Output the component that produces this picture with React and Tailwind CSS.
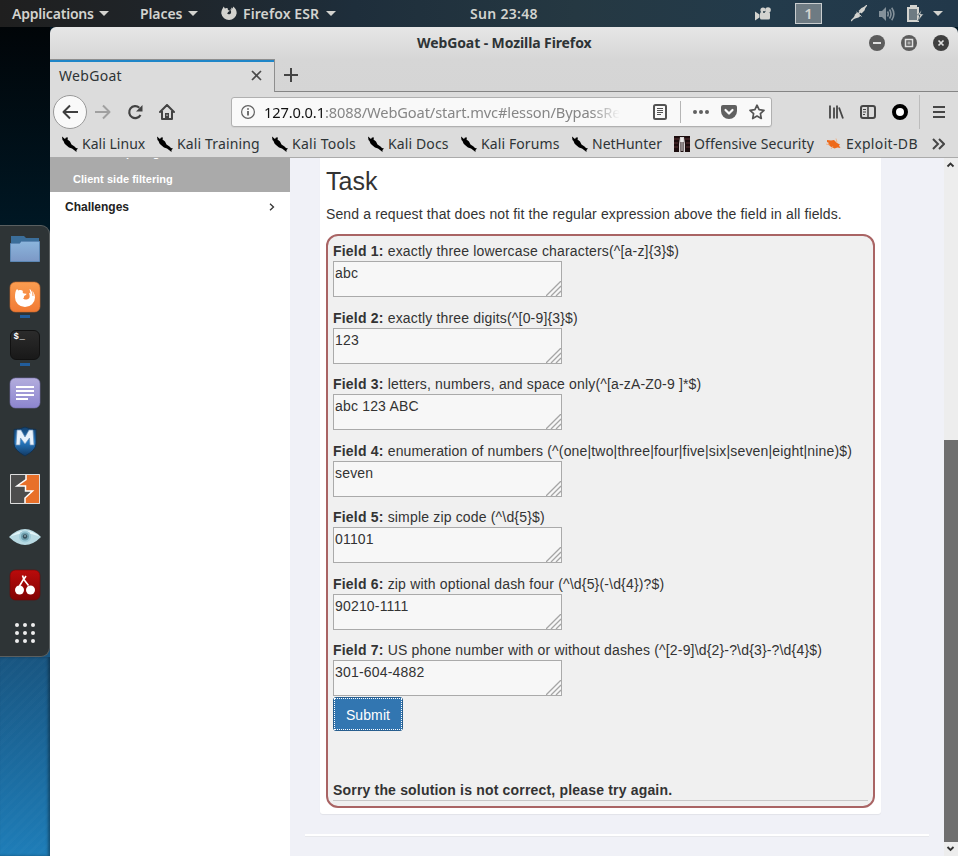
import React from "react";

const fields = [
  ["Field 1:", "exactly three lowercase characters(^[a-z]{3}$)", "abc"],
  ["Field 2:", "exactly three digits(^[0-9]{3}$)", "123"],
  ["Field 3:", "letters, numbers, and space only(^[a-zA-Z0-9 ]*$)", "abc 123 ABC"],
  ["Field 4:", "enumeration of numbers (^(one|two|three|four|five|six|seven|eight|nine)$)", "seven"],
  ["Field 5:", "simple zip code (^\\d{5}$)", "01101"],
  ["Field 6:", "zip with optional dash four (^\\d{5}(-\\d{4})?$)", "90210-1111"],
  ["Field 7:", "US phone number with or without dashes (^[2-9]\\d{2}-?\\d{3}-?\\d{4}$)", "301-604-4882"],
];

const Caret = () => (
  <svg width="10" height="5" viewBox="0 0 10 5" className="shrink-0"><path d="M0 0h10L5 5z" fill="#d3d3cf" /></svg>
);

function TopBar() {
  return (
    <header className="flex h-[27px] w-full shrink-0 items-center overflow-hidden whitespace-nowrap bg-[linear-gradient(90deg,#1f1f1f_0%,#1f252a_18%,#1e2e3b_37%,#253842_60%,#233b4b_80%,#22384a_100%)] text-[14px] font-semibold text-[#d3d3cf]">
      <div className="flex w-[128px] shrink-0 items-center pl-3">
        <span className="w-[87px] tracking-[-0.2px]">Applications</span><Caret />
      </div>
      <div className="flex w-[93px] shrink-0 items-center pl-3">
        <span className="w-[48px] tracking-[-0.1px]">Places</span><Caret />
      </div>
      <div className="flex w-[249px] shrink-0 items-center">
        <svg width="16" height="17" viewBox="0 0 16 16" className="mr-[6px] shrink-0">
          <path d="M1.500 3.200L2.700 1l1.200 2C5 2.200 6.200 2.300 7 3c-.5.7-.2 1.300.4 1.700l1.300.2c0 1-1.200 1-1.700 1.600C6.600 7 7 8 6 8c1 1.400 3.600.8 4-.6C10.500 6 9.400 4.800 9.300 3.800L10.600 4 10 2l1.800 1L12 1c2.300 1.300 3.700 3.700 3.700 6.700A7.800 7.800 0 0 1 .3 8c0-2 .4-3.500 1.200-4.800z" fill="#d3d3cf" />
        </svg>
        <span className="w-[83px] tracking-[0.1px]">Firefox ESR</span><Caret />
      </div>
      <span className="w-[285px] shrink-0 tracking-[0.3px]">Sun 23:48</span>
      <svg width="17" height="14" viewBox="0 0 17 14" className="mr-[23px] shrink-0" fill="#d3d3cf">
        <circle cx="8" cy="3" r="2.600" /><circle cx="13" cy="3" r="2.800" /><rect x="5" y="5" width="10" height="7.500" rx="1.500" /><path d="M0 4.500l4.500 3v3L0 13.500z" /><circle cx="9" cy="5" r="1" fill="#253842" />
      </svg>
      <div className="flex h-[21px] w-[27px] shrink-0 items-center justify-center border border-[#c9cdcf] bg-[#6e7b83] text-[15px]">1</div>
      <svg width="16" height="17" viewBox="0 0 16 17" className="ml-[29px] shrink-0" fill="#d3d3cf">
        <path d="M0 16L16 0" stroke="#d3d3cf" strokeWidth="1.300" />
        <path d="M2.500 14l1.500-4.500 2-2 3.500 3.500-2 1.500z" /><path d="M7.500 6l3-3L15 1l-1.500 4.500-3 3z" />
        <path d="M5.500 7l5 4.500" stroke="#d3d3cf" strokeWidth="1" />
      </svg>
      <svg width="17" height="16" viewBox="0 0 17 16" className="ml-3 shrink-0" fill="none" stroke="#84919a" strokeWidth="1.600">
        <path d="M0 5h3l4-4v14l-4-4H0z" fill="#84919a" stroke="none" /><path d="M8.500 5.500q1.500 2.500 0 5M10.500 3.500q3 4.500 0 9M12.700 1.700q4.300 6.300 0 12.600" />
      </svg>
      <svg width="17" height="17" viewBox="0 0 17 17" className="ml-[11px] shrink-0">
        <path d="M1 3h3V1h5v2h2v13H1z" fill="#6e7b83" stroke="#d3d3cf" strokeWidth="2" /><path d="M3 1h7v3H3z" fill="#d3d3cf" /><path d="M14.500 5l-4 5h2.500l-2 6 5.500-7h-3z" fill="#d3d3cf" stroke="#233b4b" strokeWidth=".5" />
      </svg>
      <div className="ml-[9px]"><Caret /></div>
    </header>
  );
}

function Dock() {
  return (
    <aside className="flex w-[50px] shrink-0 flex-col bg-[linear-gradient(180deg,#010508_0%,#001825_25%,#18527c_74%,#1e7db8_100%)] pt-[198px]">
      <div className="flex h-[432px] w-[50px] flex-col items-center gap-[16px] rounded-r-[9px] border-y border-r border-[#5a5f60] bg-[#2e3436] pt-[7px]">
        <svg width="32" height="32" viewBox="0 0 32 32">
          <path d="M2 3h13l2 2h13v8H2z" fill="#3b6e9a" />
          <path d="M1.500 10.500h9l2-2h18v20h-29z" fill="url(#folder)" stroke="#5c87b4" />
          <defs><linearGradient id="folder" x2="0" y2="1"><stop stopColor="#8bb5dc" /><stop offset="1" stopColor="#7c98c6" /></linearGradient></defs>
        </svg>
        <div className="relative h-8 w-8">
          <svg width="32" height="32" viewBox="0 0 32 32">
            <defs><linearGradient id="ff" x2="0" y2="1"><stop stopColor="#fb9d50" /><stop offset="1" stopColor="#f17a34" /></linearGradient></defs>
            <rect x="1" y="1" width="30" height="30" rx="5.500" fill="url(#ff)" stroke="#c96a2d" strokeWidth=".6" />
            <path d="M8 8l1.500 1.500c1.500-.6 3.200-.5 4.500.4-.8 1-.2 2 .8 2.500l2.700.3c0 1.600-2.200 1.600-2.500 2.700-.3 1 .3 1.500-1 1.900 1.300 2 5.500 1.700 6.500-.8.600-1.800-.4-3.200-.5-4.700l1.500 1c0-2-.8-3.500-1-4.800 3.400 1.400 5.500 4.400 5.500 8.500a10 9.500 0 0 1-20 0C6 12.500 6.400 10 8 8z" fill="#fff" />
            <path d="M22 8.500q2.500 3 2 6.500" stroke="#f99450" fill="none" />
          </svg>
          <div className="absolute -bottom-[5px] left-[11px] h-[3px] w-[10px] bg-[#215d9c]" />
        </div>
        <div className="relative h-8 w-8">
          <div className="m-px h-[30px] w-[30px] rounded-[6px] border border-[#111] bg-[linear-gradient(#2b2b2b,#191919)] pl-[3px] pt-[1px] font-['Liberation_Mono',monospace] text-[9px] font-bold leading-[10px] tracking-[0.6px] text-white">$_</div>
          <div className="absolute -bottom-[5px] left-[11px] h-[3px] w-[10px] bg-[#215d9c]" />
        </div>
        <svg width="32" height="32" viewBox="0 0 32 32">
          <defs><linearGradient id="note" x2="0" y2="1"><stop stopColor="#b3addd" /><stop offset="1" stopColor="#8c85cf" /></linearGradient></defs>
          <rect x="1" y="1" width="30" height="30" rx="5.500" fill="url(#note)" stroke="#7770ad" strokeWidth=".6" />
          <path d="M7 10h18M7 14h18M7 18h18M7 22h12" stroke="#fff" strokeWidth="2" />
        </svg>
        <svg width="32" height="32" viewBox="0 0 32 32">
          <defs><linearGradient id="shield" x2="0" y2="1"><stop stopColor="#13406e" /><stop offset=".5" stopColor="#277bc5" /><stop offset="1" stopColor="#123963" /></linearGradient></defs>
          <path d="M5 4.500q6 0 11-2.500 5 2.500 11 2.500V19q0 6-11 12Q5 25 5 19z" fill="url(#shield)" stroke="#123251" />
          <path d="M7 20L8 5h4l4 7 4-7h4l1 15h-4l-.5-7L16 19l-4.500-6-.5 7z" fill="#e8f2fc" stroke="#6b91b8" strokeWidth=".7" />
        </svg>
        <svg width="32" height="32" viewBox="0 0 32 32">
          <path d="M1 1h30v30H1z" fill="#e8702a" /><path d="M1 1h16v6l-9 6h8v5h7l-7 7v6H1z" fill="#4d4d4d" />
          <path d="M17 1v5.500L8 13h8.500v5h7l-7.500 7v6" fill="none" stroke="#fff" strokeWidth="1.500" /><path d="M1.500 1.500h29v29h-29z" fill="none" stroke="#ddd" />
        </svg>
        <svg width="32" height="32" viewBox="0 0 32 32">
          <path d="M0 16q8-8 16-8t16 8q-8 8-16 8T0 16z" fill="#b8dae3" /><path d="M1 15.500q8-6 15-6t15 6q-8-3-15-3t-15 3z" fill="#e3f5f9" />
          <circle cx="16" cy="15.500" r="6" fill="#9fcbd8" /><circle cx="16" cy="15.500" r="4" fill="#6f9fae" /><circle cx="16" cy="15.500" r="2.200" fill="#36515e" /><circle cx="16" cy="15" r=".8" fill="#c9e0e6" />
        </svg>
        <svg width="32" height="32" viewBox="0 0 32 32">
          <defs><linearGradient id="cherry" x2="0" y2="1"><stop stopColor="#ba0b0b" /><stop offset="1" stopColor="#820303" /></linearGradient></defs>
          <rect x="1" y="1" width="30" height="30" rx="5.500" fill="url(#cherry)" stroke="#6d0707" strokeWidth=".6" />
          <path d="M13.500 6.500l1.200 3.500-4.200 7M14.500 10l5 6.500M15 10l2-3" stroke="#fff" strokeWidth="1.600" fill="none" /><circle cx="10.500" cy="21" r="4.500" fill="#fff" /><circle cx="21.500" cy="21" r="4.500" fill="#fff" />
        </svg>
        <svg width="32" height="32" viewBox="0 0 32 32" fill="#eee">
          {[8, 16, 24].map((x) => [8, 16, 24].map((y) => <circle key={x + "-" + y} cx={x} cy={y} r="2" />))}
        </svg>
      </div>
      <div className="w-[50px] flex-1 bg-[repeating-linear-gradient(135deg,transparent_0px,transparent_4px,rgba(255,255,255,0.015)_4px,rgba(255,255,255,0.015)_7px)] shadow-[inset_-2px_0_3px_rgba(0,0,0,0.35)]" />
    </aside>
  );
}

function TitleAndTabs() {
  return (
    <div className="flex h-[65px] shrink-0 flex-col rounded-t-[6px] bg-[linear-gradient(#e6e6e6,#d6d6d6_50%,#d5d5d5)]">
      <div className="flex h-8 shrink-0 items-center pl-[367px] text-[14px] font-bold text-[#2e3436]">
        <span className="w-[452px] shrink-0 whitespace-nowrap pb-px tracking-[-0.1px]">WebGoat - Mozilla Firefox</span>
        <svg width="80" height="16" viewBox="0 0 80 16" fill="none" stroke="#e0e0e0">
          <circle cx="8" cy="8" r="8" fill="#5c5c5c" stroke="none" /><path d="M4 8h8" strokeWidth="2" />
          <circle cx="40" cy="8" r="8" fill="#5c5c5c" stroke="none" /><rect x="36.500" y="4.500" width="7" height="7" strokeWidth="1.500" /><rect x="38.500" y="6.500" width="3" height="3" fill="#aaa" stroke="none" />
          <circle cx="72" cy="8" r="8" fill="#3f3f3f" stroke="none" /><path d="M69.500 5.500l5 5m0-5l-5 5" strokeWidth="1.700" />
        </svg>
      </div>
      <div className="flex h-[33px] shrink-0">
        <div className="flex h-[33px] w-[225px] shrink-0 flex-col border-r border-t border-[#8e8e8e] bg-[#dcdcdc]">
          <div className="h-[2px] shrink-0 bg-[#1f86c8]" />
          <div className="flex flex-1 items-center pb-[3px] pl-[9px] pr-3 text-[14px] text-[#2e3436]">
            <span className="flex-1 tracking-[0.3px]">WebGoat</span>
            <svg width="11" height="11" viewBox="0 0 11 11"><path d="M1 1l9 9m0-9l-9 9" stroke="#4a4a4a" strokeWidth="1.700" /></svg>
          </div>
        </div>
        <div className="flex flex-1 items-center border-b border-[#858585] pl-[9px]">
          <svg width="14" height="14" viewBox="0 0 14 14"><path d="M7 0v14M0 7h14" stroke="#444" strokeWidth="2" /></svg>
        </div>
      </div>
    </div>
  );
}

function NavBar() {
  return (
    <div className="flex h-[39px] shrink-0 items-center bg-[#dcdcdc] pl-[3px]">
      <div className="flex h-[34px] w-[34px] shrink-0 items-center justify-center rounded-full border border-[#999] bg-[#f9f9f9]">
        <svg width="16" height="16" viewBox="0 0 16 16" fill="none" stroke="#3e3e3e" strokeWidth="2"><path d="M16 8H1.500M8 1.500L1.500 8 8 14.500" strokeLinejoin="round" /></svg>
      </div>
      <svg width="16" height="16" viewBox="0 0 16 16" className="ml-2 shrink-0" fill="none" stroke="#a0a0a0" strokeWidth="2"><path d="M0 8h14.500M8 1.500L14.500 8 8 14.500" strokeLinejoin="round" /></svg>
      <svg width="16" height="16" viewBox="0 0 16 16" className="ml-4 shrink-0" fill="none" stroke="#424242" strokeWidth="2.200"><path d="M13.500 11A6 6 0 1 1 12.300 3.700" /><path d="M15.500 1v6.500H9z" fill="#424242" stroke="none" /></svg>
      <svg width="16" height="16" viewBox="0 0 16 16" className="ml-[16px] shrink-0" fill="none" stroke="#424242" strokeWidth="2"><path d="M1 8l7-7 7 7M3 7v8h10V7" strokeLinejoin="round" strokeLinecap="round" /><path d="M6 9h4v5H6z" fill="#424242" stroke="none" /><path d="M8 10.500v1.500" stroke="#ddd" strokeWidth="1" /></svg>
      <div className="ml-[56px] flex h-[30px] w-[541px] shrink-0 items-center rounded-[3px] border border-[#b0b0b0] bg-[#f9f9f9] shadow-[0_1px_1px_rgba(0,0,0,0.06)]">
        <svg width="14" height="14" viewBox="0 0 14 14" className="ml-[9px] shrink-0" fill="none" stroke="#606060"><circle cx="7" cy="7" r="6.400" strokeWidth="1.200" /><path d="M7 6v4.500M7 3.200v1.600" strokeWidth="1.800" /></svg>
        <div className="ml-[9px] w-[356px] shrink-0 overflow-hidden whitespace-nowrap text-[14.67px] tracking-[-0.13px] text-[#868686] [mask-image:linear-gradient(90deg,#000_92%,transparent_100%)]"><span className="text-[#111]">127.0.0.1</span>:8088/WebGoat/start.mvc#lesson/BypassRestrictions</div>
        <svg width="14" height="16" viewBox="0 0 14 16" className="ml-[33px] shrink-0" fill="none" stroke="#535353"><rect x="1" y="1" width="12" height="14" rx="1.500" strokeWidth="2" /><path d="M4 4.500h6M4 6.500h6M4 8.500h6M4 10.500h4" /></svg>
        <div className="ml-[13px] h-[22px] w-px shrink-0 bg-[#b5b5b5]" />
        <svg width="16" height="16" viewBox="0 0 16 16" className="ml-3 shrink-0" fill="#606060"><circle cx="2" cy="8" r="2" /><circle cx="8" cy="8" r="2" /><circle cx="14" cy="8" r="2" /></svg>
        <svg width="16" height="16" viewBox="0 0 16 16" className="ml-3 shrink-0"><path d="M2 1h12q2 0 2 2v4a8 8 0 0 1-16 0V3q0-2 2-2z" fill="#606060" /><path d="M4.500 6L8 9.500 11.500 6" stroke="#f9f9f9" strokeWidth="2.200" strokeLinecap="round" strokeLinejoin="round" fill="none" /></svg>
        <svg width="16" height="16" viewBox="0 0 16 16" className="ml-3 shrink-0"><path d="M8 1.200l2.100 4.500 4.900.6-3.600 3.300.9 4.900L8 12.100l-4.300 2.400.9-4.900L1 6.300l4.900-.6z" fill="none" stroke="#555" strokeWidth="1.700" strokeLinejoin="round" /></svg>
      </div>
      <svg width="16" height="16" viewBox="0 0 16 16" className="ml-[56px] shrink-0" stroke="#464646" strokeWidth="2"><path d="M2 1.500v13M6 3.500v11M9 1.500v13M11 3.500l4 11" strokeWidth="1.800" /></svg>
      <svg width="16" height="16" viewBox="0 0 16 16" className="ml-4 shrink-0" fill="none" stroke="#464646"><rect x="1" y="2" width="14" height="12" rx="2" strokeWidth="2" /><path d="M8 2v12" strokeWidth="1.600" /><path d="M3 5.500h3M3 8h3M3 10.500h2" /></svg>
      <div className="ml-4 h-4 w-4 shrink-0 rounded-full border-4 border-black bg-white" />
      <div className="ml-[11px] h-[34px] w-px shrink-0 bg-[#bcbcbc]" />
      <svg width="12" height="14" viewBox="0 0 12 14" className="ml-[13px] shrink-0"><path d="M0 2h12M0 7h12M0 12h12" stroke="#464646" strokeWidth="2" /></svg>
    </div>
  );
}

const Kali = () => (
  <svg width="16" height="16" viewBox="0 0 16 16" className="shrink-0"><path d="M0 .5L3 3l1-1.500h2L5.500 3.500 8 5.500l1.500 3 3 2L14 12l2 .5-1.500 1.500V16L12 14l-2-1.500-3-1L4 9 2.500 7.500 1.500 5 .5 4z" fill="#000" /></svg>
);

const OffSec = () => (
  <svg width="16" height="16" viewBox="0 0 16 16" className="shrink-0"><path d="M0 0h16v16H0z" fill="#1c0d0e" /><path d="M0 3h5M0 7h4M11 3h5M12 7h4M0 11h4M12 11h4" stroke="#5a3234" /><path d="M6 1h4l1 7v8H9.500V6h-3v10H5V8z" fill="#d9d5d5" /><path d="M7.500 2h1v13h-1z" fill="#fff" /></svg>
);

const Bug = () => (
  <svg width="16" height="16" viewBox="0 0 16 16" className="shrink-0"><path d="M1 4l4 .5 3-.5 3 3 3 1.500-1 1 1.500 2.500-3-.5-3 1-4-2-2.500-2.500 1-1-2-1z" fill="#ee6a1b" /><path d="M0 8l4 1M5 13l2-3M10 2.500l1 4" stroke="#f5a06a" strokeWidth=".7" /></svg>
);

function Bookmarks() {
  const cell = "flex shrink-0 items-center gap-1 whitespace-nowrap";
  return (
    <div className="flex h-[27px] shrink-0 items-center border-b border-[#ababab] bg-[#dcdcdc] pb-px pl-3 text-[14px] text-[#2e3436]">
      <div className={cell + " w-[95px]"}><Kali /><span className="tracking-[0.02px]">Kali Linux</span></div>
      <div className={cell + " w-[115px]"}><Kali /><span className="tracking-[0.14px]">Kali Training</span></div>
      <div className={cell + " w-[96px]"}><Kali /><span className="tracking-[0.25px]">Kali Tools</span></div>
      <div className={cell + " w-[93px]"}><Kali /><span className="tracking-[0.12px]">Kali Docs</span></div>
      <div className={cell + " w-[111px]"}><Kali /><span className="tracking-[0.1px]">Kali Forums</span></div>
      <div className={cell + " w-[102px]"}><Kali /><span className="tracking-[0px]">NetHunter</span></div>
      <div className={cell + " w-[152px]"}><OffSec /><span className="tracking-[0.07px]">Offensive Security</span></div>
      <div className={cell + " w-[106px]"}><Bug /><span className="tracking-[0.35px]">Exploit-DB</span></div>
      <svg width="13" height="12" viewBox="0 0 13 12" className="shrink-0" fill="none" stroke="#464646" strokeWidth="2"><path d="M1 1l5 5-5 5M7 1l5 5-5 5" /></svg>
    </div>
  );
}

function Sidebar() {
  return (
    <nav className="flex w-[240px] shrink-0 flex-col bg-white font-['Liberation_Sans',Arial,sans-serif] font-bold">
      <div className="flex h-[34px] flex-col justify-end overflow-hidden bg-[#aaa] pb-[6px] pl-[23px] text-[11px] leading-[14px] text-white">
        <span className="mb-[12px] shrink-0">HTML tampering</span>
        <span className="shrink-0 tracking-[0.04px]">Client side filtering</span>
      </div>
      <div className="flex h-[30px] items-center justify-between pl-[15px] pr-[15px] text-[12px] text-[#222]">
        <span>Challenges</span>
        <svg width="6" height="8" viewBox="0 0 6 8"><path d="M1 .8L4.500 4 1 7.200" fill="none" stroke="#333" strokeWidth="1.300" /></svg>
      </div>
    </nav>
  );
}

function Field({ label, rule, value }) {
  return (
    <div className="flex h-[66.5px] shrink-0 flex-col">
      <div className="h-5 shrink-0 whitespace-nowrap leading-5 tracking-[0.17px]"><b className="tracking-[0.2px]">{label}</b> {rule}</div>
      <div className="flex h-9 w-[229px] shrink-0 items-end justify-between border border-[#aaa] bg-[#f7f7f7] pl-px">
        <span className="self-start pt-[1px] leading-5 tracking-[0.18px]">{value}</span>
        <svg width="15" height="15" viewBox="0 0 15 15" className="shrink-0"><path d="M0 15L15 0M5 15L15 5M10 15l5-5" stroke="#a5a5a5" strokeWidth="1.300" /></svg>
      </div>
    </div>
  );
}

function Lesson() {
  return (
    <main className="flex min-w-0 flex-1 flex-col bg-[#f0f1f7] pl-[15px] pr-[15px] font-['Liberation_Sans',Arial,sans-serif] text-[14px] text-[#333]">
      <section className="ml-[15px] flex h-[656px] w-[561px] shrink-0 flex-col rounded-b-[3px] bg-white px-[6px] pt-[9px] shadow-[0_1px_1px_rgba(0,0,0,0.06)]">
        <h1 className="h-[37px] text-[25px] leading-[28px]">Task</h1>
        <p className="h-[30px] whitespace-nowrap leading-5 tracking-[0.125px]">Send a request that does not fit the regular expression above the field in all fields.</p>
        <div className="flex h-[574px] w-[549px] flex-col rounded-[12px] border-2 border-[#a96464] bg-[#f0f0f0] p-[5px] pt-[5.2px]">
          {fields.map(([label, rule, value]) => <Field key={label} label={label} rule={rule} value={value} />)}
          <div className="-mt-[10px] flex h-[34px] w-[70px] shrink-0 rounded-[3px] border border-[#285e8e] bg-[#3276b1] p-0 text-white">
            <div className="flex flex-1 items-center justify-center border border-dotted border-white pt-[3px] tracking-[0.1px]">Submit</div>
          </div>
          <div className="mt-[48.8px] h-[22px] w-[535px] shrink-0 border-b border-[#c8c8c8] font-bold leading-[22px] tracking-[0.18px]">Sorry the solution is not correct, please try again.</div>
        </div>
      </section>
      <div className="mt-5 h-[2px] w-[624px] shrink-0 bg-white shadow-[0_1px_0_#e7e8ec]" />
    </main>
  );
}

function Scrollbar() {
  return (
    <div className="flex w-[14px] shrink-0 flex-col items-center bg-[#ededed]">
      <svg width="14" height="14" viewBox="0 0 14 14"><path d="M3.500 8.500L6.500 5.500l3 3" fill="none" stroke="#333" strokeWidth="1.800" /></svg>
      <div className="mt-[268px] h-[402px] w-[14px] bg-[#6f6f6f]" />
      <svg width="14" height="14" viewBox="0 0 14 14"><path d="M3.500 5L6.500 8l3-3" fill="none" stroke="#333" strokeWidth="1.800" /></svg>
    </div>
  );
}

export default function App() {
  return (
    <div className="flex h-[856px] w-[958px] flex-col overflow-hidden bg-[#001522] font-['Noto_Sans',sans-serif]">
      <TopBar />
      <div className="flex min-h-0 flex-1">
        <Dock />
        <div className="flex min-w-0 flex-1 flex-col">
          <TitleAndTabs />
          <NavBar />
          <Bookmarks />
          <div className="flex min-h-0 flex-1 bg-white">
            <Sidebar />
            <Lesson />
            <Scrollbar />
          </div>
        </div>
      </div>
    </div>
  );
}
